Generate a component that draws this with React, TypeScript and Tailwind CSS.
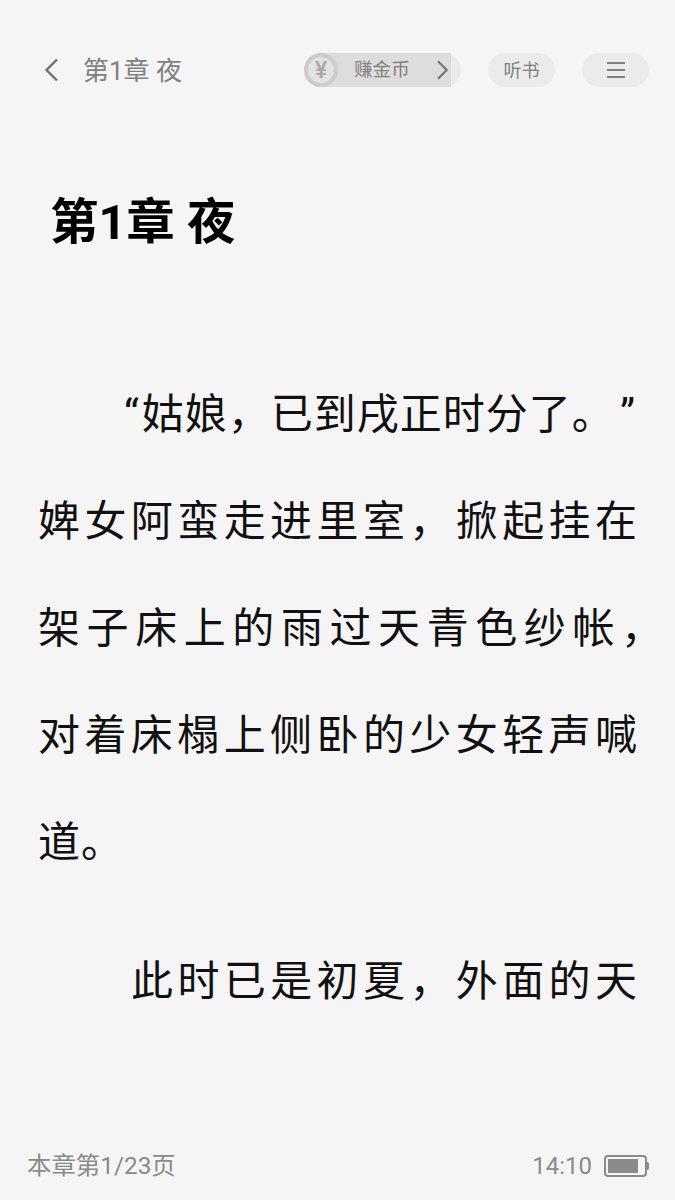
// Reader page: chapter header, body text and footer status.
const cjk = "font-['Roboto','Noto_Sans_CJK_SC',sans-serif]";

const firstParagraph = [
  { text: "婢女阿蛮走进里室，掀起挂在", width: "w-[600px]" },
  // the trailing comma hangs into the right margin
  { text: "架子床上的雨过天青色纱帐，", width: "w-[626px]" },
  { text: "对着床榻上侧卧的少女轻声喊", width: "w-[600px]" },
];

function Pill({ children, className }: { children: React.ReactNode; className: string }) {
  return (
    <div className={`flex h-[34px] items-center justify-center rounded-full bg-[#ebebeb] ${className}`}>
      {children}
    </div>
  );
}

function Chevron({ left, className }: { left?: boolean; className: string }) {
  return (
    <svg viewBox="0 0 14 24" fill="none" stroke="currentColor" strokeWidth="2.4" className={className}>
      <path d={left ? "M13 1.5 2.5 12 13 22.5" : "M1 1.5 11.5 12 1 22.5"} />
    </svg>
  );
}

function TopBar() {
  return (
    <div className="flex h-[34px] items-center pl-[44px] pr-[26px]">
      <Chevron left className="h-[24px] w-[14px] text-[#707070]" />
      <div className="ml-[25px] mt-[2px] whitespace-nowrap text-[26px] leading-[34px] text-[#808080]">第1章 夜</div>
      <div className="ml-auto flex items-center">
        <div className="flex h-[34px] w-[157px] items-center rounded-full bg-[#ebebeb]">
          <div className="flex h-[34px] w-[147px] items-center rounded-l-full bg-[#dddddd]">
            <div className="flex h-[34px] w-[34px] shrink-0 items-center justify-center rounded-full border-[4px] border-[#cccccc] bg-[#e2e2e2] text-[23px] font-medium leading-none text-[#a8a8a8]">
              ¥
            </div>
            <div className="ml-[16px] whitespace-nowrap text-[18.6px] leading-[34px] text-[#808080]">赚金币</div>
            <Chevron className="ml-[27px] h-[20px] w-[12px] shrink-0 text-[#707070]" />
          </div>
        </div>
        <Pill className="ml-[27px] w-[67px]">
          <span className="whitespace-nowrap text-[18px] text-[#808080]">听书</span>
        </Pill>
        <Pill className="ml-[27px] w-[67px]">
          <div className="flex w-[18px] flex-col gap-[5px]">
            <div className="h-[2px] bg-[#808080]" />
            <div className="h-[2px] bg-[#808080]" />
            <div className="h-[2px] bg-[#808080]" />
          </div>
        </Pill>
      </div>
    </div>
  );
}

function Battery() {
  return (
    <div className="flex items-center">
      <div className="h-[22px] w-[43px] rounded-[4px] border-[2px] border-[#8a8a8a] p-[2px]">
        <div className="h-full w-[30px] bg-[#8a8a8a]" />
      </div>
      <div className="h-[8px] w-[2px] rounded-r-[2px] bg-[#8a8a8a]" />
    </div>
  );
}

export default function App() {
  return (
    <div className={`flex h-[1200px] w-[675px] flex-col overflow-hidden bg-[#f5f5f5] ${cjk}`}>
      <div className="pt-[53px]">
        <TopBar />
      </div>
      <h1 className="mt-[105px] whitespace-nowrap pl-[50px] text-[48.5px] font-bold leading-[62px] text-black">第1章 夜</h1>
      <div className="ml-[38px] mt-[107px] w-[600px] text-[42px] leading-[107px] tracking-[1px] text-[#111111]">
        <div className="ml-[86px] whitespace-nowrap">
          <span className="mr-[2px]">“</span>姑娘，已到戌正时分了。<span className="ml-[26px]">”</span>
        </div>
        {firstParagraph.map((line) => (
          <div key={line.text} className={`whitespace-nowrap [text-align-last:justify] ${line.width}`}>
            {line.text}
          </div>
        ))}
        <div>道。</div>
        <div className="ml-[93px] mt-[32px] whitespace-nowrap [text-align-last:justify]">此时已是初夏，外面的天</div>
      </div>
      <div className="mb-[19px] mt-auto flex h-[30px] items-center justify-between pl-[27px] pr-[26px] text-[24.4px] text-[#8a8a8a]">
        <span>本章第1/23页</span>
        <div className="flex items-center gap-[12px] text-[24px]">
          <span>14:10</span>
          <Battery />
        </div>
      </div>
    </div>
  );
}
